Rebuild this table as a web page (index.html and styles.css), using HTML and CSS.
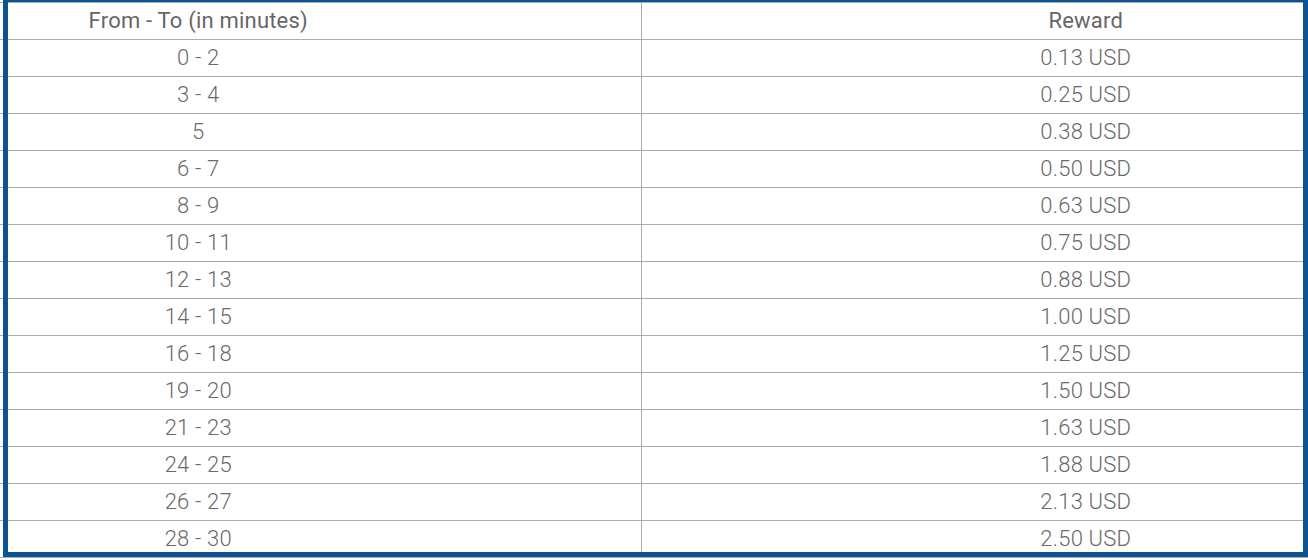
FILE: index.html
```html
<!DOCTYPE html>
<html lang="en">
<head>
<meta charset="utf-8">
<title>Reward table</title>
<link rel="stylesheet" href="styles.css">
</head>
<body>
<div class="viewport">
  <table class="rewards">
    <thead>
      <tr><th>From - To (in minutes)</th><th>Reward</th></tr>
    </thead>
    <tbody>
      <tr><td>0 - 2</td><td>0.13 USD</td></tr>
      <tr><td>3 - 4</td><td>0.25 USD</td></tr>
      <tr><td>5</td><td>0.38 USD</td></tr>
      <tr><td>6 - 7</td><td>0.50 USD</td></tr>
      <tr><td>8 - 9</td><td>0.63 USD</td></tr>
      <tr><td>10 - 11</td><td>0.75 USD</td></tr>
      <tr><td>12 - 13</td><td>0.88 USD</td></tr>
      <tr><td>14 - 15</td><td>1.00 USD</td></tr>
      <tr><td>16 - 18</td><td>1.25 USD</td></tr>
      <tr><td>19 - 20</td><td>1.50 USD</td></tr>
      <tr><td>21 - 23</td><td>1.63 USD</td></tr>
      <tr><td>24 - 25</td><td>1.88 USD</td></tr>
      <tr><td>26 - 27</td><td>2.13 USD</td></tr>
      <tr><td>28 - 30</td><td>2.50 USD</td></tr>
    </tbody>
  </table>
  <div class="frame"></div>
</div>
</body>
</html>
```

FILE: styles.css
```css
html, body {
  margin: 0;
  padding: 0;
  background: #ffffff;
}

.viewport {
  position: relative;
  width: 1308px;
  height: 560px;
  overflow: hidden;
  background: #ffffff;
}

.rewards {
  border-collapse: collapse;
  table-layout: fixed;
  width: 1776px;
  margin-left: -247px;
  margin-top: 2px;
  font-family: Roboto, "Liberation Sans", sans-serif;
  font-size: 22px;
  letter-spacing: 0.2px;
}

.rewards th,
.rewards td {
  width: 50%;
  height: 36px;
  padding: 0 0 0 2px;
  border: 1px solid #ababab;
  text-align: center;
  vertical-align: middle;
  line-height: 36px;
}

.rewards th {
  font-weight: 400;
  color: #666666;
}

.rewards td {
  font-weight: 300;
  color: #6a6a6a;
}

.frame {
  position: absolute;
  left: 3px;
  top: -3px;
  width: 1305px;
  height: 560px;
  box-sizing: border-box;
  border: 5px solid #0c5394;
  pointer-events: none;
}
```
